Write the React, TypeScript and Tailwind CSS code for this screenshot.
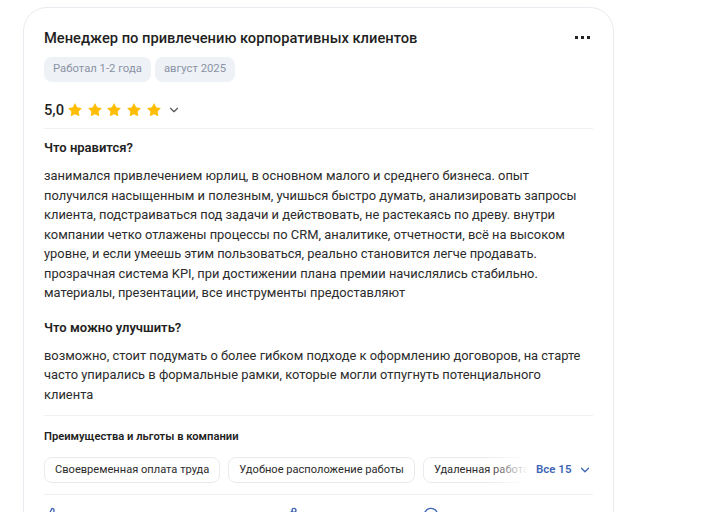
import { ChevronDown, Star, ThumbsUp, MessageCircle, Share2 } from 'lucide-react'

const likes = `занимался привлечением юрлиц, в основном малого и среднего бизнеса. опыт получился насыщенным и полезным, учишься быстро думать, анализировать запросы клиента, подстраиваться под задачи и действовать, не растекаясь по древу. внутри компании четко отлажены процессы по CRM, аналитике, отчетности, всё на высоком уровне, и если умеешь этим пользоваться, реально становится легче продавать. прозрачная система KPI, при достижении плана премии начислялись стабильно. материалы, презентации, все инструменты предоставляют`

const improve = `возможно, стоит подумать о более гибком подходе к оформлению договоров, на старте часто упирались в формальные рамки, которые могли отпугнуть потенциального клиента`

const benefits = ['Своевременная оплата труда', 'Удобное расположение работы', 'Удаленная работа']

const Tag = ({ children }: { children: string }) => (
  <span className="h-[25px] px-[9px] flex items-center rounded-lg bg-[#eef1f6] text-[11.3px] text-[#8a93a5]">
    {children}
  </span>
)

export default function App() {
  return (
    <div className="min-h-screen bg-white pt-[7px] pl-[23px] font-[Roboto,'Noto_Sans',sans-serif]">
      <div className="w-[591px] rounded-t-[24px] border border-[#e8ebf0] bg-white px-5 pt-[18px] pb-4 text-[#222]">
        <div className="flex items-start justify-between">
          <h2 className="text-[14.7px] leading-6 font-medium text-[#1f1f1f]">
            Менеджер по привлечению корпоративных клиентов
          </h2>
          <div className="mt-[10px] mr-[3px] flex gap-[3px]">
            <span className="w-[3px] h-[3px] bg-[#222]" />
            <span className="w-[3px] h-[3px] bg-[#222]" />
            <span className="w-[3px] h-[3px] bg-[#222]" />
          </div>
        </div>

        <div className="mt-[7px] flex gap-1">
          <Tag>Работал 1-2 года</Tag>
          <Tag>август 2025</Tag>
        </div>

        <div className="mt-[16px] h-6 flex items-center">
          <span className="text-[14.7px] font-medium text-[#1f1f1f] mr-[3px]">5,0</span>
          <div className="flex gap-[3.75px]">
            {[0, 1, 2, 3, 4].map(i => (
              <Star key={i} size={16} strokeWidth={0} className="fill-[#ffbd00]" />
            ))}
          </div>
          <ChevronDown size={14} strokeWidth={2} className="ml-[5px] text-[#555]" />
        </div>

        <div className="mt-[6px] h-px bg-[#eef0f4]" />

        <h3 className="mt-[9px] text-[13px] leading-5 font-semibold">Что нравится?</h3>
        <p className="mt-2 text-[12.9px] leading-[19.5px] text-[#2b2b2b]">{likes}</p>

        <h3 className="mt-[15px] text-[13px] leading-5 font-semibold">Что можно улучшить?</h3>
        <p className="mt-2 text-[12.9px] leading-[19.5px] text-[#2b2b2b]">{improve}</p>

        <div className="mt-[11px] h-px bg-[#eef0f4]" />

        <h4 className="mt-[13px] text-[11.2px] leading-4 font-semibold">Преимущества и льготы в компании</h4>

        <div className="mt-3 flex items-center">
          <div className="relative w-[484px] overflow-hidden">
            <div className="flex gap-2">
              {benefits.map(b => (
                <span
                  key={b}
                  className="shrink-0 h-[26px] px-[10px] flex items-center rounded-lg border border-[#e8ebf0] text-[11.1px] text-[#2b2b2b] whitespace-nowrap"
                >
                  {b}
                </span>
              ))}
            </div>
            <div className="absolute right-0 top-0 h-full w-[40px] bg-gradient-to-r from-white/0 to-white" />
          </div>
          <button className="ml-2 flex items-center gap-[7px] text-[11.5px] font-semibold text-[#3e66b4]">
            Все 15
            <ChevronDown size={14} strokeWidth={2.2} />
          </button>
        </div>

        <div className="mt-[11px] h-px bg-[#eef0f4]" />

        <div className="mt-3 flex items-center text-[#3e66b4] text-[13px]">
          <ThumbsUp size={16} />
          <Share2 size={16} className="ml-[222px]" />
          <MessageCircle size={16} className="ml-[125px]" />
        </div>
      </div>
    </div>
  )
}
